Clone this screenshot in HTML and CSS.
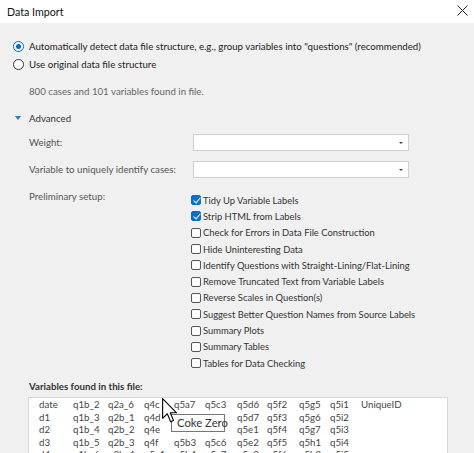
FILE: index.html
```html
<!DOCTYPE html>
<html lang="en">
<head>
  <meta charset="UTF-8">
  <title>Data Import</title>
  <link rel="stylesheet" href="styles.css">
</head>
<body>

  <div class="dialog">
    <div class="titlebar">
      <span class="title">Data Import</span>
      <svg class="close" width="11" height="11" viewBox="0 0 11 11">
        <path d="M0.5 0.5 L10.5 10.5 M10.5 0.5 L0.5 10.5" stroke="#222" stroke-width="1" fill="none"/>
      </svg>
    </div>

    <div class="content">
      <div class="option"><span class="radio checked"></span>Automatically detect data file structure, e.g., group variables into "questions" (recommended)</div>
      <div class="option"><span class="radio"></span>Use original data file structure</div>

      <p class="found">800 cases and 101 variables found in file.</p>

      <div class="advanced"><span class="caret"></span>Advanced</div>

      <div class="settings">
        <label class="field-label">Weight:</label>
        <div class="select"><span class="arrow"></span></div>

        <label class="field-label">Variable to uniquely identify cases:</label>
        <div class="select"><span class="arrow"></span></div>

        <label class="field-label setup-label">Preliminary setup:</label>
        <ul class="checks">
          <li><span class="box checked"></span>Tidy Up Variable Labels</li>
          <li><span class="box checked"></span>Strip HTML from Labels</li>
          <li><span class="box"></span>Check for Errors in Data File Construction</li>
          <li><span class="box"></span>Hide Uninteresting Data</li>
          <li><span class="box"></span>Identify Questions with Straight-Lining/Flat-Lining</li>
          <li><span class="box"></span>Remove Truncated Text from Variable Labels</li>
          <li><span class="box"></span>Reverse Scales in Question(s)</li>
          <li><span class="box"></span>Suggest Better Question Names from Source Labels</li>
          <li><span class="box"></span>Summary Plots</li>
          <li><span class="box"></span>Summary Tables</li>
          <li><span class="box"></span>Tables for Data Checking</li>
        </ul>
      </div>

      <div class="vars-title">Variables found in this file:</div>
      <!-- filled column by column; the cells under the tooltip stay blank -->
      <div class="vars-list">
        <span>date</span><span>d1</span><span>d2</span><span>d3</span><span>d4</span>
        <span>q1b_2</span><span>q1b_3</span><span>q1b_4</span><span>q1b_5</span><span>q1b_6</span>
        <span>q2a_6</span><span>q2b_1</span><span>q2b_2</span><span>q2b_3</span><span>q2b_4</span>
        <span>q4c</span><span>q4d</span><span>q4e</span><span>q4f</span><span>q5a1</span>
        <span>q5a7</span><span></span><span></span><span>q5b3</span><span>q5b4</span>
        <span>q5c3</span><span></span><span></span><span>q5c6</span><span>q5c7</span>
        <span>q5d6</span><span>q5d7</span><span>q5e1</span><span>q5e2</span><span>q5e3</span>
        <span>q5f2</span><span>q5f3</span><span>q5f4</span><span>q5f5</span><span>q5f6</span>
        <span>q5g5</span><span>q5g6</span><span>q5g7</span><span>q5h1</span><span>q5h2</span>
        <span>q5i1</span><span>q5i2</span><span>q5i3</span><span>q5i4</span><span>q5i5</span>
        <span>UniqueID</span>
      </div>
    </div>

    <!-- hover tooltip and mouse pointer over the variable list -->
    <div class="tooltip">Coke Zero</div>
    <svg class="pointer" width="16" height="25" viewBox="0 0 13 20.3">
      <path d="M0.5 0.5 L0.5 16.5 L4.3 12.8 L7 19.2 L9.3 18.2 L6.7 12 L11.8 12 Z" fill="#fff" stroke="#000" stroke-width="0.9" stroke-linejoin="round"/>
    </svg>
  </div>

</body>
</html>
```

FILE: styles.css
```css
  * {
    box-sizing: border-box;
  }

  body {
    margin: 0;
    font-family: Lato, "Open Sans", Arial, sans-serif;
    font-size: 9.7px;
    color: #222;
    overflow: hidden;
    white-space: nowrap;
  }

  .dialog {
    position: relative;
    width: 474px;
    height: 453px;
    background: #f0f0f0;
    overflow: hidden;
  }

  .titlebar {
    height: 23px;
    background: white;
    display: flex;
    align-items: center;
    justify-content: space-between;
    padding: 0 6px 0 7px;
  }

  .title {
    font-size: 10.7px;
    color: #111;
  }

  .close {
    margin-bottom: 2px;
  }

  .content {
    padding: 14px 0 0 13px;
  }

  .option {
    display: flex;
    align-items: center;
    height: 18px;
  }

  .radio {
    flex-shrink: 0;
    width: 11px;
    height: 11px;
    border: 1px solid #333;
    border-radius: 50%;
    background: white;
    margin-right: 5px;
    position: relative;
  }

  .radio.checked {
    border-color: #0a64c8;
  }

  .radio.checked::after {
    content: "";
    position: absolute;
    left: 2px;
    top: 2px;
    width: 5px;
    height: 5px;
    border-radius: 50%;
    background: #0a64c8;
  }

  .found {
    margin: 10px 0 0 16px;
    height: 17px;
    line-height: 17px;
    color: #666;
  }

  .advanced {
    display: flex;
    align-items: center;
    height: 17px;
    margin-top: 9px;
    color: #333;
  }

  .caret {
    width: 0;
    height: 0;
    border-left: 3px solid transparent;
    border-right: 3px solid transparent;
    border-top: 4px solid #2b78d0;
    margin: 0 8px 0 2px;
  }

  .settings {
    display: grid;
    grid-template-columns: 164px 216px;
    margin: 8px 0 0 16px;
    align-items: center;
  }

  .field-label {
    color: #555;
    height: 17px;
    line-height: 17px;
  }

  .select {
    height: 17px;
    margin-bottom: 10px;
    background: white;
    border: 1px solid #d0d0d0;
    position: relative;
  }

  .settings .field-label {
    margin-bottom: 10px;
  }

  .select .arrow {
    position: absolute;
    right: 5px;
    top: 7px;
    border-left: 2px solid transparent;
    border-right: 2px solid transparent;
    border-top: 2px solid #444;
  }

  .settings .setup-label {
    align-self: start;
  }

  .checks {
    list-style: none;
    margin: 4px 0 0 -2px;
    padding: 0;
    font-size: 9.4px;
  }

  .checks li {
    display: flex;
    align-items: center;
    height: 16.3px;
    color: #333;
  }

  .box {
    flex-shrink: 0;
    width: 10px;
    height: 10px;
    border: 1px solid #555;
    border-radius: 2px;
    background: white;
    margin-right: 2px;
    position: relative;
  }

  .box.checked {
    background: #0a6ed1;
    border-color: #0a6ed1;
  }

  .box.checked::after {
    content: "";
    position: absolute;
    left: 2.5px;
    top: 0;
    width: 3px;
    height: 6px;
    border-right: 1.5px solid white;
    border-bottom: 1.5px solid white;
    transform: rotate(40deg);
  }

  .vars-title {
    margin: 7px 0 0 16px;
    font-weight: bold;
    color: #333;
    height: 16px;
    line-height: 16px;
  }

  .vars-list {
    margin: 3px 0 0 15px;
    width: 420px;
    height: 80px;
    background: white;
    border: 1px solid #d8d8d8;
    padding-left: 10px;
    display: grid;
    grid-auto-flow: column;
    grid-template-rows: repeat(5, 12.5px);
    grid-template-columns: 34px 35px 36px 30px 31px 32px 30px 32px 31px 31px auto;
    color: #444;
    line-height: 12.5px;
  }

  .tooltip {
    position: absolute;
    left: 171px;
    top: 414px;
    width: 54px;
    height: 18px;
    line-height: 16px;
    padding-left: 5px;
    background: white;
    border: 1px solid #767676;
    color: #333;
    font-size: 11.3px;
  }

  .pointer {
    position: absolute;
    left: 162px;
    top: 398px;
  }
```
